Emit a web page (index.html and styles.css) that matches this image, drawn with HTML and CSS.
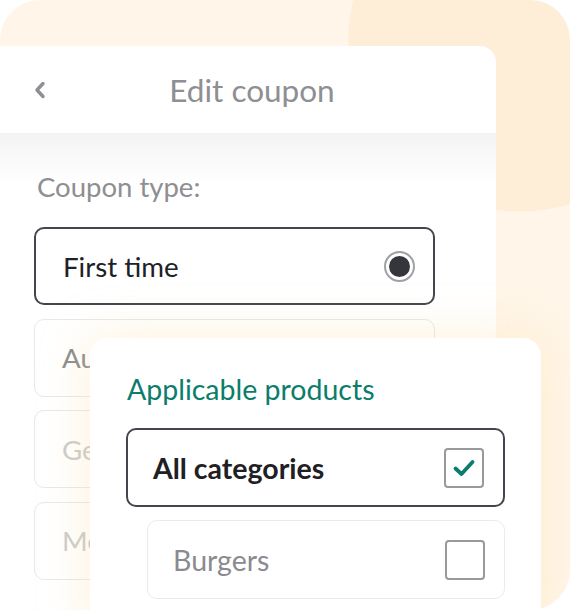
FILE: index.html
```html
<!DOCTYPE html>
<html lang="en">
<head>
    <meta charset="UTF-8">
    <meta name="viewport" content="width=device-width, initial-scale=1.0">
    <title>Edit coupon</title>
    <link rel="stylesheet" href="styles.css">
</head>
<body>

    <div class="frame">
        <div class="screen">
            <div class="header">
                <button class="back" aria-label="Back">
                    <svg width="12" height="18" viewBox="0 0 12 18">
                        <path d="M9 2.5 L3 9 L9 15.5" fill="none" stroke="#8e8e93" stroke-width="3.4" stroke-linecap="round" stroke-linejoin="round"/>
                    </svg>
                </button>
                <h1>Edit coupon</h1>
                <span></span>
            </div>

            <div class="content">
                <p class="label">Coupon type:</p>

                <div class="options">
                    <label class="option selected">
                        <span>First time</span>
                        <span class="radio"><span class="dot"></span></span>
                    </label>
                    <label class="option">
                        <span>Automatic</span>
                    </label>
                    <label class="option muted">
                        <span>General</span>
                    </label>
                    <label class="option muted">
                        <span>Members</span>
                    </label>
                </div>
            </div>
        </div>

        <!-- popup above the coupon form -->
        <div class="popup">
            <h2>Applicable products</h2>

            <div class="choice checked">
                <span>All categories</span>
                <span class="checkbox">
                    <svg width="24" height="20" viewBox="0 0 24 20">
                        <path d="M3.5 10.5 L9.5 16 L20.5 4" fill="none" stroke="#0b7d6c" stroke-width="3.8" stroke-linecap="round" stroke-linejoin="round"/>
                    </svg>
                </span>
            </div>

            <div class="choice sub">
                <span>Burgers</span>
                <span class="checkbox"></span>
            </div>
        </div>
    </div>

</body>
</html>
```

FILE: styles.css
```css
body {
    margin: 0;
    background-color: #fff;
    font-family: Lato, "Noto Sans", sans-serif;
}

.frame {
    position: relative;
    width: 570px;
    height: 610px;
    border-radius: 40px;
    overflow: hidden;
    background-color: #fff6e9;
    background-image:
        radial-gradient(circle at 520px 40px, #feedd7 171px, rgba(254, 237, 215, 0) 172px),
        radial-gradient(circle at 660px 660px, #fde6c6 117px, rgba(253, 230, 198, 0) 118px);
}

.screen {
    width: 496px;
    margin-top: 46px;
    height: 600px;
    background-color: #fff;
    border-radius: 0 16px 0 0;
}

.header {
    height: 87px;
    display: grid;
    grid-template-columns: 1fr auto 1fr;
    align-items: center;
    padding: 0 26px 0 34px;
}

.back {
    justify-self: start;
    border: none;
    background: none;
    padding: 0;
    display: flex;
}

h1 {
    margin: 0;
    font-size: 31.5px;
    font-weight: 400;
    color: #8e8e93;
}

.content {
    padding: 39px 61px 0 34px;
    background: linear-gradient(#f3f3f4, #fff 50px);
}

.label {
    margin: 0 0 25px 3px;
    font-size: 27.5px;
    line-height: 30px;
    color: #8e8e93;
}

.options {
    display: flex;
    flex-direction: column;
    gap: 13.5px;
}

.option {
    height: 78px;
    box-sizing: border-box;
    display: flex;
    align-items: center;
    justify-content: space-between;
    padding: 0 18px 0 27px;
    border: 1.5px solid #e8e8ea;
    border-radius: 10px;
    font-size: 27.7px;
    color: #8a8a8f;
}

.option.selected {
    border: 2px solid #44464d;
    color: #202126;
}

.option.muted {
    color: #c9cbcc;
}

.radio {
    width: 27px;
    height: 27px;
    border: 2px solid #a0a0a5;
    border-radius: 50%;
    display: flex;
    align-items: center;
    justify-content: center;
}

.dot {
    width: 21px;
    height: 21px;
    border-radius: 50%;
    background-color: #35363c;
}

.popup {
    position: absolute;
    left: 90px;
    top: 338px;
    width: 451px;
    height: 300px;
    box-sizing: border-box;
    padding: 36px 36px 0 36px;
    background-color: #fff;
    border-radius: 18px;
    box-shadow: 0 0 50px rgba(252, 214, 150, 0.35);
}

h2 {
    margin: 0 0 24px 1px;
    font-size: 28.5px;
    font-weight: 400;
    line-height: 30px;
    color: #0b7d6c;
}

.choice {
    height: 79px;
    box-sizing: border-box;
    display: flex;
    align-items: center;
    justify-content: space-between;
    padding: 0 19px 0 25px;
    border: 1.5px solid #ebebed;
    border-radius: 10px;
    font-size: 28.5px;
    color: #8a8a90;
}

.choice.checked {
    border: 2px solid #44464d;
    color: #1f2024;
    font-weight: 700;
}

.choice.sub {
    margin: 13px 0 0 21px;
}

.checkbox {
    width: 36px;
    height: 36px;
    border: 2px solid #98989d;
    border-radius: 4px;
    display: flex;
    align-items: center;
    justify-content: center;
}
```
